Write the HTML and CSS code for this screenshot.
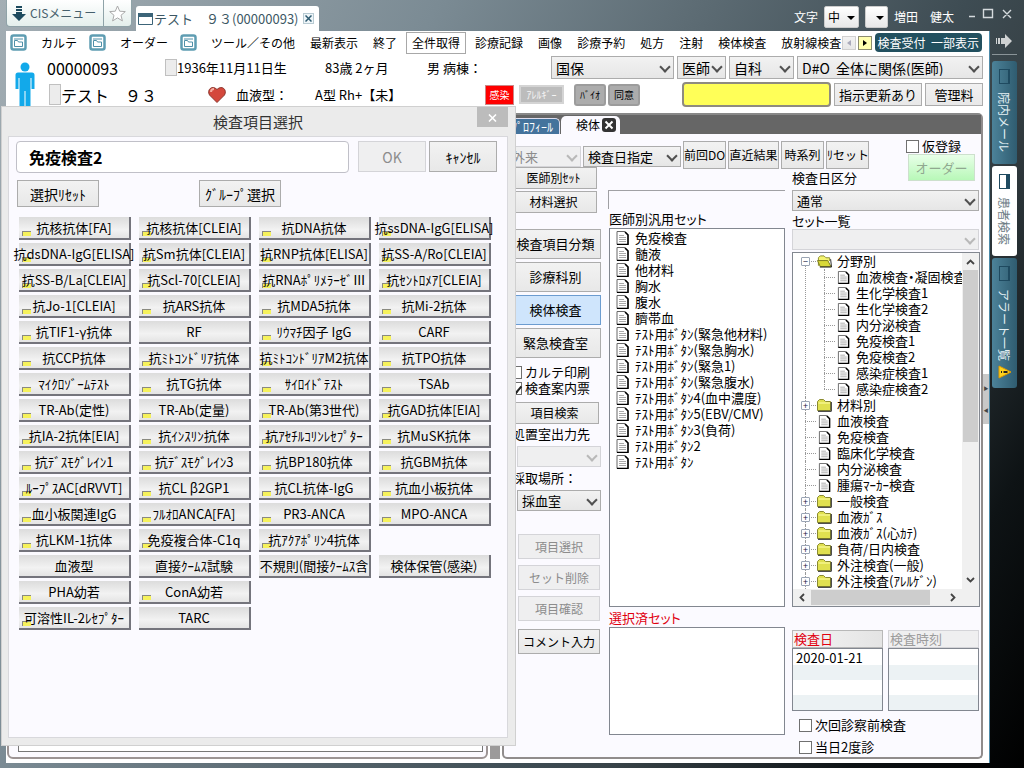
FILE: index.html
```html
<!DOCTYPE html>
<html lang="ja">
<head>
  <meta charset="UTF-8" />
  <meta name="viewport" content="width=device-width, initial-scale=1" />
  <title>テスト　９３(00000093)</title>
  <link rel="stylesheet" href="styles.css">
</head>
<body>

  <!-- shared icons -->
  <svg class="defs" width="0" height="0" aria-hidden="true">
    <symbol id="i-doc" viewBox="0 0 13 14">
      <path d="M1 .5h8l3 3v10H1z" fill="#fff" stroke="#666" />
      <path d="M9 1l3 3v9.500H1" fill="none" stroke="#000" stroke-width="1.500" />
      <path d="M3 4.500h5M3 6.500h7M3 8.500h7M3 10.500h7" stroke="#aaa" />
    </symbol>
    <symbol id="i-folder" viewBox="0 0 15 13">
      <path d="M.5 11.500v-9l2-2h4l2 2h5v9z" fill="#e0e050" stroke="#8a8a30" />
      <path d="M1.500 4h11.500" stroke="#ffffa8" />
      <path d="M1 12.300h13.300V3" fill="none" stroke="#222" />
    </symbol>
    <symbol id="i-open" viewBox="0 0 16 13">
      <path d="M1.500 11V2.500l2-2h4l2 2h4V6" fill="#f4f470" stroke="#8a8a30" />
      <path d="M.5 5.500h11l3.500 6.500H3.500z" fill="#d8d838" stroke="#77771c" />
      <path d="M3 12.400h12.500L14.500 4" fill="none" stroke="#222" />
    </symbol>
    <symbol id="i-menu" viewBox="0 0 17 17">
      <rect x="1.500" y="1.500" width="14" height="14" rx="2" fill="#fff" stroke="#5f9db2" stroke-width="2.500" />
      <path d="M4.500 12.500v-6h3l1 1.500h4v4.500z" fill="#fff" stroke="#4f90a8" />
      <path d="M4 5h9" stroke="#4f90a8" />
    </symbol>
  </svg>

  <header class="titlebar">
    <button class="cis">
      <svg width="14" height="15" viewBox="0 0 14 15"><path d="M4 0h6v2H4zM4 3h6v2H4zM4 6h6v2h4l-7 7-7-7h4z" fill="#1d4a5e" /></svg>
      CISメニュー
    </button>
    <button class="star" aria-label="お気に入り">
      <svg width="17" height="17" viewBox="0 0 17 17"><path d="M8.500 1l2.200 5.200 5.600.4-4.300 3.700 1.400 5.600-4.900-3-4.900 3L5 10.300.7 6.600l5.600-.4z" fill="#fff" stroke="#aaa" /></svg>
    </button>
    <div class="window-tab">
      <svg width="15" height="12" viewBox="0 0 15 12"><path d="M.5.5h14v11H.5z" fill="#fff" stroke="#3c6478" /><path d="M0 0h15v4H0z" fill="#3c6478" /></svg>
      <span>テスト　９３(00000093)</span>
      <button class="tab-close" aria-label="閉じる">
        <svg width="7" height="7" viewBox="0 0 7 7"><path d="M.5.5l6 6m0-6l-6 6" stroke="#2d5a70" stroke-width="1.500" /></svg>
      </button>
    </div>
    <div class="user-area">
      <label for="char-size">文字</label>
      <span class="mini-select"><select id="char-size"><option>中</option></select></span>
      <span class="mini-select narrow"><select aria-label="設定"><option></option></select></span>
      <span class="user">増田　健太</span>
      <svg class="win-ctl" width="46" height="12" viewBox="0 0 46 12"><path d="M1 8.500h6M15.500 1.500h9v8h-9zM35 2l8 8m0-8l-8 8" fill="none" stroke="#d5dadd" stroke-width="1.400" /></svg>
    </div>
  </header>

  <div class="shell">
    <main class="client">
      <nav class="menubar">
        <svg width="17" height="17"><use href="#i-menu" /></svg>
        <a href="#">カルテ</a>
        <svg width="17" height="17"><use href="#i-menu" /></svg>
        <a href="#">オーダー</a>
        <svg width="17" height="17"><use href="#i-menu" /></svg>
        <a href="#">ツール／その他</a>
        <a href="#">最新表示</a>
        <a href="#">終了</a>
        <a href="#" class="boxed">全件取得</a>
        <a href="#">診療記録</a>
        <a href="#">画像</a>
        <a href="#">診療予約</a>
        <a href="#">処方</a>
        <a href="#">注射</a>
        <a href="#">検体検査</a>
        <a href="#" class="cut">放射線検査</a>
        <div class="menu-end">
          <button class="scroll-left" aria-label="左へ"></button>
          <button class="scroll-right" aria-label="右へ"></button>
          <button class="reception">検査受付&nbsp; 一部表示</button>
        </div>
      </nav>

      <section class="patient">
        <svg class="man" width="20" height="46" viewBox="0 0 20 46"><circle cx="10" cy="5" r="4.500" fill="#12a9ea" /><path d="M3 10.500h14q2.500 0 2.500 2.500v14h-3V16h-1v29h-5V29h-1v16h-5V16h-1v11h-3V13q0-2.500 2.500-2.500z" fill="#12a9ea" /></svg>
        <div class="patient-rows">
          <div class="patient-row">
            <span class="pid">00000093</span>
            <span class="dob"><i class="chip"></i>1936年11月11日生</span>
            <span class="age">83歳 2ヶ月</span>
            <span>男 病棟：</span>
            <div class="patient-tools">
              <span class="select w-ins"><select aria-label="保険"><option>国保</option></select></span>
              <span class="select w-doc"><select aria-label="職種"><option>医師</option></select></span>
              <span class="select w-dep"><select aria-label="科"><option>自科</option></select></span>
              <span class="select w-all"><select aria-label="範囲"><option>D#O&nbsp; 全体に関係(医師)</option></select></span>
            </div>
          </div>
          <div class="patient-row">
            <span class="name"><i class="chip"></i>テスト　９３</span>
            <svg class="heart" width="18" height="17" viewBox="0 0 18 17"><path d="M9 16.500L1.500 9C-1.500 4 4-1.500 9 3.500 14-1.500 19.500 4 16.500 9z" fill="#d4483c" stroke="#8c3830" /><path d="M3 6q0-3 3-3" fill="none" stroke="#f4aca0" stroke-width="2" /></svg>
            <span class="blood">血液型：</span>
            <span class="blood-value">A型 Rh+【未】</span>
            <button class="flag infect">感染</button>
            <button class="flag allergy" disabled>ｱﾚﾙｷﾞｰ</button>
            <button class="flag dark">ﾊﾞｲｵ</button>
            <button class="flag dark">同意</button>
            <div class="patient-tools">
              <input class="notice" type="text" aria-label="お知らせ">
              <button class="big">指示更新あり</button>
              <button class="big fee">管理料</button>
            </div>
          </div>
        </div>
      </section>

      <div class="workspace">
        <section class="record-pane"><div class="record-inner"></div></section>
        <div class="splitter"></div>

        <section class="order-pane">
          <div class="tabs">
            <button class="tab">ﾌﾟﾛﾌｨｰﾙ</button>
            <button class="tab active">検体
              <svg width="14" height="14" viewBox="0 0 14 14"><rect width="14" height="14" rx="3" fill="#333" /><path d="M3.500 3.500l7 7m0-7l-7 7" stroke="#fff" stroke-width="2" /></svg>
            </button>
          </div>

          <div class="order-form">
            <div class="toolbar">
              <span class="select visit off"><select aria-label="入外" disabled><option>外来</option></select></span>
              <span class="select day"><select aria-label="検査日指定"><option>検査日指定</option></select></span>
              <button>前回DO</button>
              <button class="w-recent">直近結果</button>
              <button>時系列</button>
              <button>ﾘセット</button>
              <div class="submit">
                <label class="check"><input type="checkbox">仮登録</label>
                <button class="order" disabled>オーダー</button>
              </div>
            </div>

            <div class="side">
              <button>医師別ｾｯﾄ</button>
              <button>材料選択</button>
              <div class="category">
                <button>検査項目分類</button>
                <button>診療科別</button>
                <button class="on">検体検査</button>
                <button>緊急検査室</button>
              </div>
              <div class="checks">
                <label class="check"><input type="checkbox">カルテ印刷</label>
                <label class="check"><input type="checkbox" checked>検査案内票</label>
              </div>
              <button class="search">項目検索</button>
              <label class="caption" for="room">処置室出力先</label>
              <span class="select off"><select id="room" disabled><option></option></select></span>
              <label class="caption place" for="place">採取場所：</label>
              <span class="select"><select id="place"><option>採血室</option></select></span>
              <div class="actions">
                <button disabled>項目選択</button>
                <button disabled>セット削除</button>
                <button disabled>項目確認</button>
                <button class="comment">コメント入力</button>
              </div>
            </div>

            <div class="sets">
              <input class="keyword" type="text" aria-label="検索語">
              <h2>医師別汎用セット</h2>
              <ul class="box set-list">
                <li><svg><use href="#i-doc" /></svg>免疫検査</li>
                <li><svg><use href="#i-doc" /></svg>髄液</li>
                <li><svg><use href="#i-doc" /></svg>他材料</li>
                <li><svg><use href="#i-doc" /></svg>胸水</li>
                <li><svg><use href="#i-doc" /></svg>腹水</li>
                <li><svg><use href="#i-doc" /></svg>臍帯血</li>
                <li><svg><use href="#i-doc" /></svg>ﾃｽﾄ用ﾎﾞﾀﾝ(緊急他材料)</li>
                <li><svg><use href="#i-doc" /></svg>ﾃｽﾄ用ﾎﾞﾀﾝ(緊急胸水)</li>
                <li><svg><use href="#i-doc" /></svg>ﾃｽﾄ用ﾎﾞﾀﾝ(緊急1)</li>
                <li><svg><use href="#i-doc" /></svg>ﾃｽﾄ用ﾎﾞﾀﾝ(緊急腹水)</li>
                <li><svg><use href="#i-doc" /></svg>ﾃｽﾄ用ﾎﾞﾀﾝ4(血中濃度)</li>
                <li><svg><use href="#i-doc" /></svg>ﾃｽﾄ用ﾎﾞﾀﾝ5(EBV/CMV)</li>
                <li><svg><use href="#i-doc" /></svg>ﾃｽﾄ用ﾎﾞﾀﾝ3(負荷)</li>
                <li><svg><use href="#i-doc" /></svg>ﾃｽﾄ用ﾎﾞﾀﾝ2</li>
                <li><svg><use href="#i-doc" /></svg>ﾃｽﾄ用ﾎﾞﾀﾝ</li>
              </ul>
              <h2 class="red">選択済セット</h2>
              <div class="box chosen"></div>
            </div>

            <div class="catalog">
              <label class="caption" for="kind">検査日区分</label>
              <span class="select"><select id="kind"><option>通常</option></select></span>
              <label class="caption" for="set-group">セット一覧</label>
              <span class="select off"><select id="set-group" disabled><option></option></select></span>
              <div class="box tree-box">
                <ul class="tree">
                  <li class="open"><button class="toggle" aria-label="閉じる">−</button><svg><use href="#i-open" /></svg>分野別
                    <ul>
                      <li><svg><use href="#i-doc" /></svg>血液検査・凝固検査</li>
                      <li><svg><use href="#i-doc" /></svg>生化学検査1</li>
                      <li><svg><use href="#i-doc" /></svg>生化学検査2</li>
                      <li><svg><use href="#i-doc" /></svg>内分泌検査</li>
                      <li><svg><use href="#i-doc" /></svg>免疫検査1</li>
                      <li><svg><use href="#i-doc" /></svg>免疫検査2</li>
                      <li><svg><use href="#i-doc" /></svg>感染症検査1</li>
                      <li><svg><use href="#i-doc" /></svg>感染症検査2</li>
                    </ul>
                  </li>
                  <li><button class="toggle" aria-label="開く">+</button><svg><use href="#i-folder" /></svg>材料別</li>
                  <li><svg><use href="#i-doc" /></svg>血液検査</li>
                  <li><svg><use href="#i-doc" /></svg>免疫検査</li>
                  <li><svg><use href="#i-doc" /></svg>臨床化学検査</li>
                  <li><svg><use href="#i-doc" /></svg>内分泌検査</li>
                  <li><svg><use href="#i-doc" /></svg>腫瘍ﾏｰｶｰ検査</li>
                  <li><button class="toggle" aria-label="開く">+</button><svg><use href="#i-folder" /></svg>一般検査</li>
                  <li><button class="toggle" aria-label="開く">+</button><svg><use href="#i-folder" /></svg>血液ｶﾞｽ</li>
                  <li><button class="toggle" aria-label="開く">+</button><svg><use href="#i-folder" /></svg>血液ｶﾞｽ(心ｶﾃ)</li>
                  <li><button class="toggle" aria-label="開く">+</button><svg><use href="#i-folder" /></svg>負荷/日内検査</li>
                  <li><button class="toggle" aria-label="開く">+</button><svg><use href="#i-folder" /></svg>外注検査(一般)</li>
                  <li><button class="toggle" aria-label="開く">+</button><svg><use href="#i-folder" /></svg>外注検査(ｱﾚﾙｹﾞﾝ)</li>
                </ul>
                <div class="vbar">
                  <svg width="9" height="6" viewBox="0 0 9 6"><path d="M1 5l3.500-3.500L8 5" fill="none" stroke="#444" stroke-width="1.800" /></svg>
                  <i></i>
                  <svg width="9" height="6" viewBox="0 0 9 6"><path d="M1 1l3.500 3.500L8 1" fill="none" stroke="#444" stroke-width="1.800" /></svg>
                </div>
                <div class="hbar">
                  <svg width="6" height="9" viewBox="0 0 6 9"><path d="M5 1L1.500 4.500 5 8" fill="none" stroke="#444" stroke-width="1.800" /></svg>
                  <i></i>
                  <svg width="6" height="9" viewBox="0 0 6 9"><path d="M1 1l3.500 3.500L1 8" fill="none" stroke="#444" stroke-width="1.800" /></svg>
                </div>
              </div>
              <div class="dates">
                <table>
                  <thead><tr><th>検査日</th></tr></thead>
                  <tbody><tr><td>2020-01-21</td></tr><tr><td></td></tr><tr><td></td></tr><tr><td></td></tr></tbody>
                </table>
                <table class="times">
                  <thead><tr><th>検査時刻</th></tr></thead>
                  <tbody><tr><td></td></tr><tr><td></td></tr><tr><td></td></tr><tr><td></td></tr></tbody>
                </table>
              </div>
              <div class="options">
                <label class="check"><input type="checkbox">次回診察前検査</label>
                <label class="check"><input type="checkbox">当日2度診</label>
              </div>
            </div>
          </div>
        </section>

        <div class="gutter"><div class="grip"><span>▶</span><span>◀</span></div></div>
      </div>
    </main>

    <aside class="rail">
      <svg class="rail-arrow" width="16" height="14" viewBox="0 0 16 14"><path d="M0 4h1v6H0zM2 4h2v6H2zM5 4h4V0l7 7-7 7v-4H5z" fill="#cfd2d3" /></svg>
      <hr>
      <button class="rail-tab mail"><i></i>院内メール</button>
      <button class="rail-tab current"><i></i>患者検索</button>
      <button class="rail-tab alert"><i></i>アラート一覧
        <svg width="14" height="14" viewBox="0 0 14 14"><path d="M1 1l12 6-12 6z" fill="#ffd21c" stroke="#e09a00" /><path d="M3 7h1M5.500 7h4" stroke="#222" stroke-width="2" /></svg>
      </button>
    </aside>
  </div>

  <div class="dialog" role="dialog" aria-labelledby="dialog-title">
    <div class="dialog-head">
      <h1 id="dialog-title">検査項目選択</h1>
      <button class="dialog-close" aria-label="閉じる">
        <svg width="9" height="8" viewBox="0 0 9 8"><path d="M1 .5l7 7m0-7l-7 7" stroke="#fff" stroke-width="1.600" /></svg>
      </button>
    </div>
    <div class="dialog-body">
      <div class="dialog-top">
        <input class="set-name" type="text" value="免疫検査2" aria-label="セット名">
        <button class="ok" disabled>OK</button>
        <button>ｷｬﾝｾﾙ</button>
      </div>
      <div class="dialog-sub">
        <button>選択ﾘｾｯﾄ</button>
        <button>ｸﾞﾙｰﾌﾟ選択</button>
      </div>
      <div class="items">
        <button class="mark">抗核抗体[FA]</button>
        <button class="mark">抗核抗体[CLEIA]</button>
        <button class="mark">抗DNA抗体</button>
        <button class="mark">抗ssDNA-IgG[ELISA]</button>
        <button class="mark">抗dsDNA-IgG[ELISA]</button>
        <button class="mark">抗Sm抗体[CLEIA]</button>
        <button class="mark">抗RNP抗体[ELISA]</button>
        <button class="mark">抗SS-A/Ro[CLEIA]</button>
        <button class="mark">抗SS-B/La[CLEIA]</button>
        <button class="mark">抗Scl-70[CLEIA]</button>
        <button class="mark">抗RNAﾎﾟﾘﾒﾗｰｾﾞⅢ</button>
        <button class="mark">抗ｾﾝﾄﾛﾒｱ[CLEIA]</button>
        <button class="mark">抗Jo-1[CLEIA]</button>
        <button class="mark">抗ARS抗体</button>
        <button class="mark">抗MDA5抗体</button>
        <button class="mark">抗Mi-2抗体</button>
        <button class="mark">抗TIF1-γ抗体</button>
        <button>RF</button>
        <button class="mark">ﾘｳﾏﾁ因子 IgG</button>
        <button class="mark">CARF</button>
        <button class="mark">抗CCP抗体</button>
        <button class="mark">抗ﾐﾄｺﾝﾄﾞﾘｱ抗体</button>
        <button class="mark">抗ﾐﾄｺﾝﾄﾞﾘｱM2抗体</button>
        <button class="mark">抗TPO抗体</button>
        <button class="mark">ﾏｲｸﾛｿﾞｰﾑﾃｽﾄ</button>
        <button class="mark">抗TG抗体</button>
        <button class="mark">ｻｲﾛｲﾄﾞﾃｽﾄ</button>
        <button class="mark">TSAb</button>
        <button class="mark">TR-Ab(定性)</button>
        <button class="mark">TR-Ab(定量)</button>
        <button class="mark">TR-Ab(第3世代)</button>
        <button class="mark">抗GAD抗体[EIA]</button>
        <button class="mark">抗IA-2抗体[EIA]</button>
        <button class="mark">抗ｲﾝｽﾘﾝ抗体</button>
        <button class="mark">抗ｱｾﾁﾙｺﾘﾝﾚｾﾌﾟﾀｰ</button>
        <button class="mark">抗MuSK抗体</button>
        <button class="mark">抗ﾃﾞｽﾓｸﾞﾚｲﾝ1</button>
        <button class="mark">抗ﾃﾞｽﾓｸﾞﾚｲﾝ3</button>
        <button class="mark">抗BP180抗体</button>
        <button class="mark">抗GBM抗体</button>
        <button class="mark">ﾙｰﾌﾟｽAC[dRVVT]</button>
        <button class="mark">抗CL β2GP1</button>
        <button class="mark">抗CL抗体-IgG</button>
        <button class="mark">抗血小板抗体</button>
        <button class="mark">血小板関連IgG</button>
        <button class="mark">ﾌﾙｵﾛANCA[FA]</button>
        <button class="mark">PR3-ANCA</button>
        <button class="mark">MPO-ANCA</button>
        <button class="mark">抗LKM-1抗体</button>
        <button class="mark">免疫複合体-C1q</button>
        <button class="mark">抗ｱｸｱﾎﾟﾘﾝ4抗体</button>
        <button class="first">血液型</button>
        <button>直接ｸｰﾑｽ試験</button>
        <button>不規則(間接ｸｰﾑｽ含</button>
        <button>検体保管(感染)</button>
        <button class="mark">PHA幼若</button>
        <button class="mark">ConA幼若</button>
        <button class="mark first">可溶性IL-2ﾚｾﾌﾟﾀｰ</button>
        <button>TARC</button>
      </div>
    </div>
  </div>

</body>
</html>
```

FILE: styles.css
```css
* {
  box-sizing: border-box;
}
body {
  margin: 0;
  min-height: 100vh;
  display: flex;
  flex-direction: column;
  position: relative;
  overflow-x: hidden;
  background: linear-gradient(120deg, #a3aeb4 0%, #7b8b94 30%, #3e4c53 66%, #384348 72%, #0e1315 88%, #000 100%);
  font-family: "Noto Sans CJK JP", "Noto Sans", sans-serif;
  font-size: 13px;
  line-height: 16px;
  color: #000;
}
button,
select,
input {
  font: inherit;
  color: inherit;
  margin: 0;
}
button {
  padding: 0;
  border: 1px solid #acacac;
  background: linear-gradient(#f2f2f2, #e8e8e8);
  white-space: nowrap;
}
button:disabled {
  color: #8c8c8c;
  border-color: #d4d4d8;
  background: #efeff0;
}
ul {
  list-style: none;
  margin: 0;
  padding: 0;
}
h1,
h2 {
  margin: 0;
  font-size: 13px;
  font-weight: normal;
}
svg {
  flex: none;
}
.defs {
  position: absolute;
}

/* selects */
.select {
  position: relative;
  display: block;
  height: 21px;
}
.select select {
  display: block;
  width: 100%;
  height: 100%;
  padding: 0 0 0 4px;
  border: 1px solid #acacac;
  border-radius: 0;
  background: linear-gradient(#f2f2f2, #e6e6e6);
  appearance: none;
}
.select::after {
  content: "";
  position: absolute;
  right: 5px;
  top: 50%;
  width: 6px;
  height: 6px;
  margin-top: -5px;
  border: solid #505050;
  border-width: 0 2px 2px 0;
  transform: rotate(45deg);
}
.off select {
  border-color: #d4d4d8;
  background: #efeff0;
  color: #8c8c8c;
  opacity: 1;
}
.off::after {
  border-color: #b8b8b8;
}

.check {
  display: flex;
  align-items: center;
  gap: 3px;
  white-space: nowrap;
}
.check input {
  appearance: none;
  flex: none;
  width: 13px;
  height: 13px;
  border: 1px solid #707070;
  background: #fff;
}
.check input:checked::after {
  content: "";
  display: block;
  width: 4px;
  height: 7px;
  margin: 1px 0 0 4px;
  border: solid #222;
  border-width: 0 2px 2px 0;
  transform: rotate(40deg);
}

/* title bar */
.titlebar {
  height: 31px;
  display: flex;
  align-items: flex-start;
  padding-left: 6px;
}
.cis,
.star {
  height: 27px;
  display: flex;
  align-items: center;
  border: 1px solid #8fa3a8;
  border-top: 0;
  background: linear-gradient(#fff, #e4efec);
  color: #46606c;
}
.cis {
  width: 98px;
  gap: 4px;
  padding-left: 5px;
  font-size: 12px;
  border-radius: 0 0 0 4px;
}
.star {
  width: 28px;
  justify-content: center;
  border-left: 0;
  border-radius: 0 0 4px 0;
}
.window-tab {
  height: 25px;
  margin: 6px 0 0 4px;
  padding: 0 5px 0 2px;
  display: flex;
  align-items: center;
  gap: 1px;
  border-radius: 3px 3px 0 0;
  background: #fff;
  color: #3c5764;
}
.tab-close {
  width: 11px;
  height: 11px;
  margin-left: 3px;
  display: flex;
  align-items: center;
  justify-content: center;
  border-color: #b8cad2;
  background: #eef5f8;
}
.user-area {
  margin-left: auto;
  padding: 6px 10px 0 0;
  display: flex;
  align-items: center;
  gap: 6px;
  font-size: 12px;
  color: #fff;
}
.mini-select {
  position: relative;
  width: 35px;
  height: 22px;
}
.mini-select.narrow {
  width: 23px;
}
.mini-select select {
  width: 100%;
  height: 100%;
  padding: 0 0 0 3px;
  border: 1px solid #ccc;
  border-radius: 2px;
  background: linear-gradient(#fff, #e8e8e8);
  appearance: none;
  color: #000;
}
.mini-select::after {
  content: "";
  position: absolute;
  right: 4px;
  top: 10px;
  border: 4px solid transparent;
  border-top-color: #000;
  border-bottom: 0;
}
.user {
  margin-right: 8px;
}
.win-ctl {
  margin-bottom: 6px;
}

/* frame */
.shell {
  flex: 1;
  display: flex;
  padding: 0 0 6px 6px;
}
.client {
  flex: 1;
  min-width: 0;
  display: flex;
  flex-direction: column;
  background: #fff;
  border-right: 1px solid #4d8aa8;
}
.menubar {
  height: 23px;
  display: flex;
  align-items: center;
  gap: 15px;
  padding: 0 7px 0 4px;
  font-size: 12px;
  white-space: nowrap;
}
.menubar a {
  color: #000;
  text-decoration: none;
}
.menubar svg {
  margin-right: -1px;
}
.menubar a + svg {
  margin-left: -3px;
}
.menubar .boxed {
  margin: 0 -6px;
  padding: 2px 5px;
  border: 1px solid #a8a8a8;
}
.menubar .cut {
  flex: 1;
  min-width: 0;
  overflow: hidden;
}
.menu-end {
  display: flex;
  align-items: center;
  gap: 2px;
  margin-left: -14px;
}
.scroll-left,
.scroll-right {
  width: 14px;
  height: 14px;
  padding-left: 4px;
  border-color: #d0d0d0;
}
.scroll-right {
  border-color: #8c8c70;
  background: #ffffb0;
}
.scroll-left::after,
.scroll-right::after {
  content: "";
  display: block;
  width: 0;
  border: 3px solid transparent;
  border-left: 4px solid #000;
  border-right: 0;
}
.scroll-left::after {
  border-left: 0;
  border-right: 4px solid #aab;
}
.reception {
  height: 19px;
  margin-left: 1px;
  padding: 0 3px;
  border: 0;
  border-radius: 4px;
  background: #22505f;
  color: #fff;
}

/* patient header */
.patient {
  display: flex;
  padding: 2px 6px 4px 9px;
}
.man {
  margin: 6px 12px 0 0;
}
.patient-rows {
  flex: 1;
  min-width: 0;
}
.patient-row {
  height: 23px;
  display: flex;
  align-items: center;
  white-space: nowrap;
}
.patient-row + .patient-row {
  height: 25px;
  margin-top: 3px;
}
.pid {
  width: 118px;
  font-size: 16px;
}
.chip {
  flex: none;
  width: 12px;
  height: 17px;
  border: 1px solid #c0c0c0;
  background: #ececec;
}
.dob,
.name {
  display: flex;
  align-items: center;
}
.dob {
  width: 160px;
}
.age {
  width: 102px;
}
.name {
  width: 161px;
  padding-left: 2px;
  font-size: 16px;
}
.name .chip {
  height: 21px;
}
.heart {
  margin-right: 10px;
}
.blood {
  width: 79px;
}
.blood-value {
  width: 170px;
}
.flag {
  font-size: 10px;
  line-height: 14px;
}
.infect {
  width: 29px;
  height: 20px;
  margin-right: 5px;
  border-color: #c88;
  background: #f00;
  color: #fff;
}
.flag.allergy {
  width: 45px;
  height: 19px;
  margin-right: 10px;
  border: 2px solid #d4d4d4;
  background: #bcbcbc;
  color: #f4f4f4;
}
.flag.dark {
  width: 32px;
  height: 22px;
  margin-right: 2px;
  border: 2px solid #9c9c9c;
  border-radius: 3px;
  background: #acacac;
}
.patient-tools {
  margin-left: auto;
  display: flex;
  align-items: center;
  gap: 3px;
  font-size: 14px;
}
.patient-tools .select {
  height: 23px;
}
.w-ins {
  width: 123px;
}
.w-doc {
  width: 49px;
}
.w-dep {
  width: 65px;
}
.w-all {
  width: 186px;
}
.notice {
  width: 149px;
  height: 25px;
  border: 2px solid #8f8b80;
  border-radius: 4px;
  background: #ffff58;
}
.big {
  width: 88px;
  height: 23px;
  font-size: 13px;
}
.fee {
  width: 58px;
}

/* workspace */
.workspace {
  flex: 1;
  display: grid;
  grid-template-columns: minmax(0, 1fr) 14px minmax(0, 1fr) 6px;
  padding: 1px 0 4px 1px;
}
.record-pane {
  padding: 5px 3px 5px 9px;
  border: 2px solid #9c9494;
  border-radius: 0 0 6px 6px;
  background: #fbfaff;
}
.record-inner {
  height: 100%;
  border: 1px solid #777;
  background: #fff;
}
.splitter {
  margin: 0 2px;
  background: #9c9a9a;
}
.order-pane {
  display: flex;
  flex-direction: column;
  border: 2px solid #908c8c;
  border-top-color: #888;
  border-radius: 0 5px 5px 5px;
  background: #fbfaff;
}
.tabs {
  height: 19px;
  display: flex;
  align-items: flex-end;
  background: #666;
}
.tab {
  height: 16px;
  width: 56px;
  border: 1px solid #dde;
  border-bottom: 0;
  border-radius: 0 5px 0 0;
  background: #44739c;
  color: #fff;
  font-size: 12px;
  line-height: 14px;
}
.tab.active {
  height: 18px;
  width: 59px;
  margin-left: 1px;
  padding-left: 15px;
  display: flex;
  align-items: center;
  gap: 2px;
  border: 0;
  border-radius: 5px 5px 0 0;
  background: #fbfaff;
  color: #000;
}
.order-form {
  flex: 1;
  display: grid;
  grid-template-columns: 94px minmax(0, 1fr) 188px;
  grid-template-rows: auto 1fr;
  column-gap: 7px;
  padding: 4px 1px 2px 3px;
}
.toolbar {
  grid-column: 1 / 4;
  height: 31px;
  display: flex;
  align-items: flex-end;
  gap: 2px;
}
.toolbar > .select {
  margin-bottom: 2px;
}
.toolbar > button {
  width: 43px;
  height: 28px;
  font-size: 12px;
}
.toolbar > button.w-recent {
  width: 51px;
}
.visit {
  width: 74px;
}
.day {
  width: 98px;
}
.submit {
  align-self: flex-start;
  margin: 0 5px 0 auto;
}
.order {
  display: block;
  width: 67px;
  height: 27px;
  margin-left: 2px;
}
.order:disabled {
  border-color: #cde0cd;
  background: linear-gradient(#e8ffe8, #b8f8b8);
  color: #90a890;
}

/* left buttons */
.side {
  display: flex;
  flex-direction: column;
  align-items: stretch;
  margin-top: -2px;
}
.side > button {
  height: 22px;
  margin: 0 4px 2px 3px;
  font-size: 12px;
}
.category {
  display: flex;
  flex-direction: column;
  gap: 3px;
  margin: 14px 0 0 3px;
}
.category button {
  height: 30px;
}
.category .on {
  border-color: #6c9cd0;
  background: #cfe5fc;
}
.checks {
  margin: 6px 0 6px 2px;
}
.side > .search {
  margin: 0 2px 2px 3px;
}
.side > .caption {
  padding-left: 5px;
}
.side > .select {
  margin: 4px 0 3px 10px;
}
.actions {
  display: flex;
  flex-direction: column;
  gap: 6px;
  margin: 20px 1px 0 11px;
}
.actions button {
  height: 25px;
  font-size: 12px;
}
.actions .comment {
  margin-top: 2px;
}
.caption {
  display: block;
  white-space: nowrap;
}

/* set list */
.box {
  border: 1px solid #828790;
  background: #fff;
}
.sets {
  display: flex;
  flex-direction: column;
  padding: 21px 0 20px;
}
.sets h2 {
  margin: 2px 0 1px 1px;
  font-feature-settings: "palt";
}
.keyword {
  width: 100%;
  height: 19px;
  border: solid #a0a0a4;
  border-width: 1px 0 0 1px;
  background: #fbfaff;
}
.set-list {
  flex: 1;
  margin-left: 1px;
  padding-top: 1px;
}
.set-list li {
  height: 16px;
  display: flex;
  align-items: center;
  gap: 6px;
  padding-left: 6px;
  white-space: nowrap;
}
.set-list svg {
  width: 13px;
  height: 14px;
}
.sets .red {
  margin-top: 3px;
  color: #e00010;
}
.chosen {
  height: 108px;
  margin-left: 1px;
}

/* set catalog */
.catalog {
  display: flex;
  flex-direction: column;
  padding-top: 1px;
  font-feature-settings: "palt";
}
.catalog .select {
  margin: 4px 1px 2px 0;
}
.catalog .select.off {
  margin-top: 0;
}
.tree-box {
  flex: 1;
  display: grid;
  grid-template-columns: minmax(0, 1fr) 17px;
  grid-template-rows: 1fr 17px;
}
.tree {
  overflow: hidden;
  white-space: nowrap;
  padding-left: 24px;
}
.tree li {
  position: relative;
  line-height: 16px;
}
.tree svg {
  width: 15px;
  height: 13px;
  margin-right: 5px;
  vertical-align: -2px;
}
.tree ul {
  padding-left: 19px;
}
.tree li::before {
  content: "";
  position: absolute;
  left: -12px;
  top: 0;
  width: 11px;
  height: 8px;
  border-bottom: 1px dotted #999;
}
.tree li::after {
  content: "";
  position: absolute;
  left: -12px;
  top: 0;
  bottom: 0;
  border-left: 1px dotted #999;
}
.tree > li:first-child::after {
  top: 8px;
}
.tree li li:last-child::after {
  bottom: 8px;
}
.toggle {
  position: absolute;
  z-index: 1;
  left: -16px;
  top: 4px;
  width: 9px;
  height: 9px;
  border: 1px solid #9aa4b4;
  border-radius: 1px;
  background: #fff;
  color: #224;
  font-size: 9px;
  line-height: 6px;
}
.vbar,
.hbar {
  display: flex;
  align-items: center;
  background: #f0f0f0;
}
.vbar {
  flex-direction: column;
  padding: 6px 0;
}
.vbar i {
  width: 15px;
  height: 53%;
  margin: 5px 0 auto;
  background: #cdcdcd;
}
.hbar {
  grid-column: 1 / 3;
  padding: 0 23px 0 6px;
}
.hbar i {
  width: 76%;
  height: 15px;
  margin: 0 auto 0 6px;
  background: #cdcdcd;
}
.dates {
  display: flex;
  gap: 5px;
  margin: 23px 1px 0 0;
}
.dates table {
  flex: 1;
  border-collapse: separate;
  border-spacing: 0;
  table-layout: fixed;
}
.dates th {
  height: 18px;
  padding: 0 1px;
  border: 1px solid #b8b8b8;
  background: linear-gradient(90deg, #f4f4f4, #e4e4e4);
  font-weight: normal;
  text-align: left;
  color: #e00010;
}
.dates .times th {
  border-color: #d4d4d8;
  background: #efeff0;
  color: #9c9c9c;
}
.dates td {
  height: 15px;
  padding: 0 3px;
  border: solid #828790;
  border-width: 0 1px;
  background: #fff;
  line-height: 15px;
}
.dates tr:nth-child(even) td {
  background: #ecf2f4;
}
.dates tbody tr:first-child td {
  height: 17px;
  border-top-width: 1px;
}
.dates tbody tr:last-child td {
  height: 16px;
  border-bottom-width: 1px;
}
.options {
  display: flex;
  flex-direction: column;
  gap: 6px;
  padding: 6px 0 0 7px;
}

/* gutter right of the order pane */
.gutter {
  padding-top: 261px;
}
.grip {
  width: 6px;
  height: 50px;
  display: flex;
  flex-direction: column;
  align-items: center;
  justify-content: space-evenly;
  background: #c8c8c8;
  color: #444;
  font-size: 5px;
}

/* right rail */
.rail {
  width: 34px;
  padding: 3px 7px 0 2px;
  display: flex;
  flex-direction: column;
  gap: 2px;
}
.rail-arrow {
  margin-left: 4px;
}
.rail hr {
  width: 100%;
  height: 1px;
  margin: 4px 0;
  border: 0;
  background: #8a9498;
}
.rail-tab {
  display: flex;
  align-items: center;
  justify-content: flex-start;
  gap: 8px;
  padding: 8px 0;
  border: 0;
  border-radius: 3px;
  background: linear-gradient(90deg, #4c8299, #2f5c70);
  color: #e4f0f4;
  font-size: 12px;
  line-height: 25px;
  writing-mode: vertical-rl;
  text-orientation: sideways;
}
.mail {
  height: 103px;
}
.rail-tab i {
  width: 11px;
  height: 15px;
  border: 1px solid #1f4a60;
  border-right-width: 2px;
}
.current {
  height: 90px;
  background: #fff;
  color: #6c7c84;
}
.current i {
  border-right-width: 4px;
}
.alert {
  height: 130px;
}
.alert svg {
  margin-top: -4px;
}

/* dialog */
.dialog {
  position: absolute;
  left: 1px;
  top: 106px;
  width: 515px;
  height: 640px;
  display: flex;
  flex-direction: column;
  padding: 0 7px 7px 6px;
  border: 1px solid #d0d0d0;
  background: #ebebeb;
}
.dialog-head {
  position: relative;
  height: 29px;
}
.dialog-head h1 {
  padding-top: 5px;
  font-size: 15px;
  line-height: 20px;
  text-align: center;
  color: #333;
}
.dialog-close {
  position: absolute;
  right: 0;
  top: 0;
  width: 31px;
  height: 20px;
  border: 0;
  background: #bcbcbc;
}
.dialog-body {
  flex: 1;
  padding: 4px 10px 4px 7px;
  border: 1px solid #d8d8dc;
  background: #fbfaff;
}
.dialog-top {
  display: flex;
  gap: 3px;
}
.dialog-top button {
  width: 68px;
  height: 31px;
  font-size: 14px;
}
.set-name {
  flex: 1;
  min-width: 0;
  height: 32px;
  margin-right: 6px;
  padding: 0 12px;
  border: 1px solid #c0c0c8;
  border-radius: 4px;
  background: #fff;
  font-size: 16px;
  font-weight: bold;
}
.dialog-sub {
  display: flex;
  gap: 100px;
  padding: 7px 0 10px 1px;
}
.dialog-sub button {
  width: 82px;
  height: 27px;
  font-size: 14px;
}
.items {
  display: grid;
  grid-template-columns: repeat(4, minmax(0, 1fr));
  gap: 3px 8px;
  padding: 0 6px 0 3px;
}
.items button {
  position: relative;
  z-index: 0;
  height: 23px;
  display: flex;
  align-items: center;
  justify-content: center;
  border: solid #74747c;
  border-width: 0 2px 2px 0;
  background: linear-gradient(#dcdcdc, #f2f2f2 60%, #e4e4e4);
}
.items .first {
  grid-column-start: 1;
}
.items .mark::before {
  content: "";
  position: absolute;
  z-index: -1;
  left: 3px;
  bottom: 2px;
  width: 8px;
  height: 4px;
  border: solid #8a8a80;
  border-width: 1px 0 0 1px;
  background: #f6f25c;
}
```
